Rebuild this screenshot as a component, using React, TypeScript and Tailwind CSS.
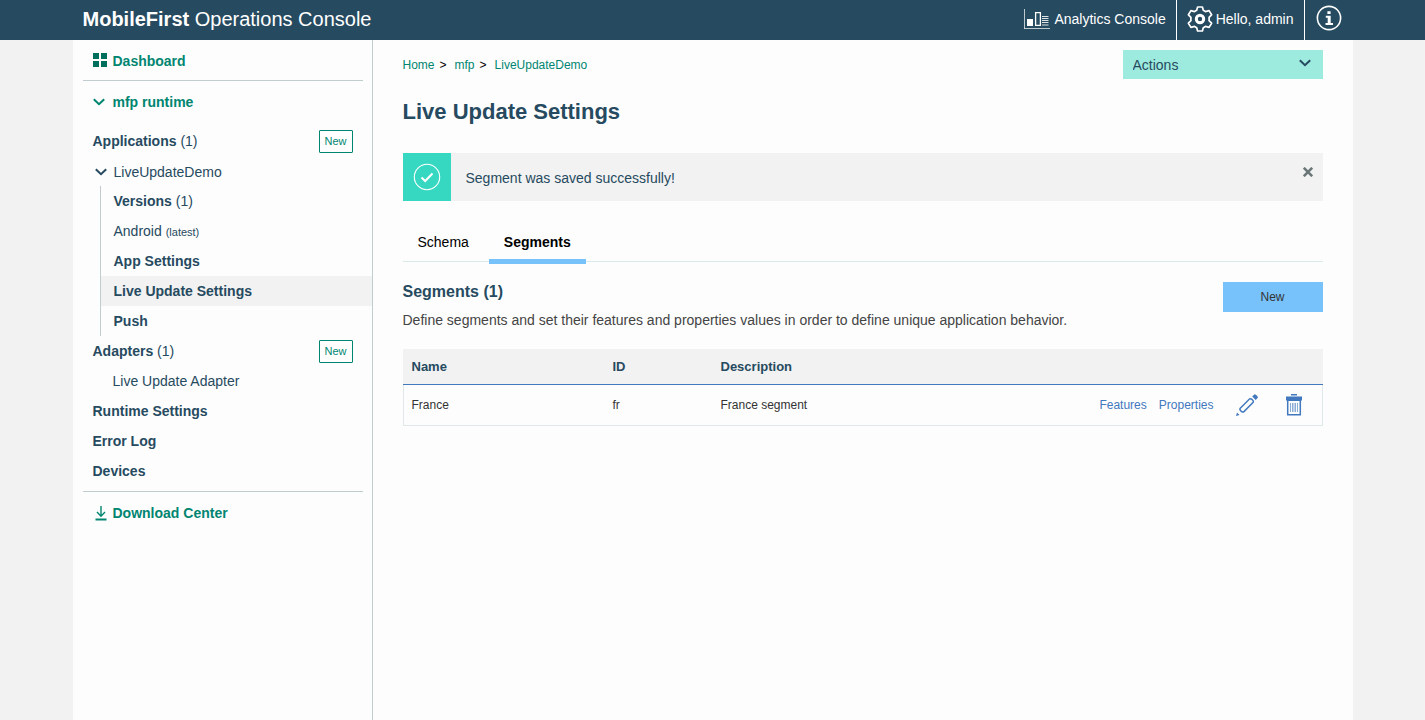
import type { ReactNode } from "react";

function ChevronIcon({ className }: { className?: string }) {
  return (
    <svg viewBox="0 0 12 8" className={className} fill="none" stroke="currentColor" strokeWidth="2" aria-hidden="true">
      <path d="M0.8 1.2 L6 6.2 L11.2 1.2" />
    </svg>
  );
}

function DashboardIcon() {
  return (
    <svg viewBox="0 0 14 14" className="mb-0.5 size-3.5 text-[#00705c]" fill="currentColor" aria-hidden="true">
      <path d="M0 0h6v6H0zM8 0h6v6H8zM0 8h6v6H0zM8 8h6v6H8z" />
    </svg>
  );
}

function DownloadIcon() {
  return (
    <svg viewBox="0 0 12 15" className="ml-0.5 h-[15px] w-3" fill="none" stroke="currentColor" aria-hidden="true">
      <path d="M6 0v10M2 6l4 4.2 4-4.2" strokeWidth="1.4" />
      <path d="M0.5 13.5h11" strokeWidth="2" />
    </svg>
  );
}

function AnalyticsIcon() {
  return (
    <svg viewBox="0 0 26 20" className="h-5 w-[26px]" fill="none" stroke="#fff" aria-hidden="true">
      <path d="M0.5 0v19.5" strokeOpacity="0.7" />
      <path d="M0 19.5h26" strokeOpacity="0.7" />
      <path d="M3 10h6v7H3z" fill="#fff" stroke="none" />
      <path d="M11.6 3.6h4.8v12.8h-4.8z" strokeWidth="1.3" />
      <path d="M18 7.5h6.5M18 9.5h6.5M18 11.5h6.5M18 13.5h6.5M18 16h6.5" strokeOpacity="0.85" />
    </svg>
  );
}

function GearIcon() {
  return (
    <svg viewBox="0 0 26 26" className="size-[26px]" fill="none" stroke="#fff" aria-hidden="true">
      <path
        d="M10.6 1h4.8l.9 3.3 2.2 1.3 3.6-1 2.5 4.2-2.500 2.500v3.400l2.500 2.500-2.500 4.200-3.600-1-2.200 1.300-.9 3.300h-4.800l-.9-3.300-2.200-1.300-3.600 1-2.500-4.200 2.500-2.500v-3.400l-2.500-2.500 2.500-4.200 3.600 1 2.200-1.300z"
        strokeWidth="1.7"
        strokeLinejoin="round"
      />
      <circle cx="13" cy="13" r="3.7" strokeWidth="3" />
    </svg>
  );
}

function InfoIcon() {
  return (
    <svg viewBox="0 0 26 26" className="size-[26px]" fill="none" stroke="#fff" aria-hidden="true">
      <circle cx="13" cy="13" r="11.6" strokeWidth="1.6" />
      <path d="M11.4 6.3h3.200v2.700h-3.200zM9.800 10.700h4.900v7.200H17V20H9.500v-2.100h2.200v-5.100H9.800z" fill="#fff" stroke="none" />
    </svg>
  );
}

function CheckIcon() {
  return (
    <svg viewBox="0 0 28 28" className="size-7" fill="none" stroke="#fff" aria-hidden="true">
      <circle cx="14" cy="14" r="12.7" strokeWidth="1.1" />
      <path d="M8.5 14.5l3.700 3.500 7.300-7.500" strokeWidth="2" />
    </svg>
  );
}

function PencilIcon() {
  return (
    <svg viewBox="0 0 22 22" className="size-[22px]" fill="none" stroke="#4178be" aria-hidden="true">
      <path d="M4 14.500L13.700 4.800c1.400-.7 4.500 2 3.500 3.500L7.500 18c-1.600.6-4.200-1.900-3.500-3.500z" strokeWidth="1.500" />
      <path d="M16.200 2.600L18.600.2c1.600.2 3 1.700 3.400 3.400l-2.300 2.300z" fill="#4178be" stroke="none" />
      <path d="M0 22l1-3.400 2.500 2.400z" fill="#4178be" stroke="none" />
    </svg>
  );
}

function TrashIcon() {
  return (
    <svg viewBox="0 0 16 22" className="h-[22px] w-4" fill="none" stroke="#4178be" aria-hidden="true">
      <path d="M5 0h6v1.500H5zM0 2.500h16V6l-1 1H1L0 6z" fill="#4178be" stroke="none" />
      <path d="M1.700 6v14.800h12.600V6" strokeWidth="1.500" />
      <path d="M4.500 9v9M6.500 9v9M8 9v9M9.500 9v9M11.500 9v9" strokeWidth="1" strokeOpacity="0.6" />
    </svg>
  );
}

function NewBadge({ label }: { label: string }) {
  return (
    <button
      type="button"
      aria-label={label}
      className="h-[23px] w-[34px] rounded-[1px] border border-[#008571] bg-white pt-0.5 text-[11px] text-[#008571]"
    >
      New
    </button>
  );
}

function SubItem({ children, active = false }: { children: ReactNode; active?: boolean }) {
  return (
    <li className={active ? "h-[30px] bg-[#f2f2f2] pl-[13px] leading-[31px]" : "h-[30px] pl-[13px] leading-[31px]"}>
      <a href="#">{children}</a>
    </li>
  );
}

function Sidebar() {
  return (
    <nav aria-label="Main" className="w-[300px] shrink-0 border-r border-[#c0cccd] text-sm text-[#264a60]">
      <a href="#" className="ml-5 flex h-10 items-center gap-1.5 pt-0.5 font-bold text-[#008571]">
        <DashboardIcon />
        Dashboard
      </a>
      <hr className="mr-[9px] ml-2.5 border-[#c0cccd]" />
      <a href="#" className="ml-5 flex h-[42px] items-center gap-2 font-bold text-[#008571]">
        <ChevronIcon className="h-2 w-3" />
        mfp runtime
      </a>
      <div className="mt-0.5 mr-[19px] ml-5 flex h-8 items-center justify-between">
        <a href="#">
          <b>Applications</b> (1)
        </a>
        <NewBadge label="New application" />
      </div>
      <a href="#" className="ml-[22px] flex h-[29px] items-center gap-[7px]">
        <ChevronIcon className="h-2 w-3" />
        LiveUpdateDemo
      </a>
      <ul className="ml-[27px] border-l border-[#c0cccd]">
        <SubItem>
          <b>Versions</b> (1)
        </SubItem>
        <SubItem>
          Android <span className="text-[11px]">(latest)</span>
        </SubItem>
        <SubItem>
          <b>App Settings</b>
        </SubItem>
        <SubItem active>
          <b>Live Update Settings</b>
        </SubItem>
        <SubItem>
          <b>Push</b>
        </SubItem>
      </ul>
      <div className="mr-[19px] ml-5 flex h-[30px] items-center justify-between">
        <a href="#">
          <b>Adapters</b> (1)
        </a>
        <NewBadge label="New adapter" />
      </div>
      <a href="#" className="ml-10 block leading-[30px]">
        Live Update Adapter
      </a>
      <a href="#" className="ml-5 block leading-[30px] font-bold">
        Runtime Settings
      </a>
      <a href="#" className="ml-5 block leading-[30px] font-bold">
        Error Log
      </a>
      <a href="#" className="ml-5 block leading-[30px] font-bold">
        Devices
      </a>
      <hr className="mt-[5px] mr-[9px] ml-2.5 border-[#c0cccd]" />
      <a href="#" className="ml-5 flex h-[42px] items-center gap-1.5 font-bold text-[#008571]">
        <DownloadIcon />
        Download Center
      </a>
    </nav>
  );
}

function Header() {
  return (
    <header className="bg-[#264a60] text-white">
      <div className="mx-auto flex h-10 max-w-[1280px] items-stretch justify-between px-2.5">
        <div className="self-center pb-0.5 text-xl">
          <b>MobileFirst</b> Operations Console
        </div>
        <div className="flex text-sm">
          <a href="#" className="flex items-center gap-1 border-r border-white pr-2.5 pb-0.5">
            <AnalyticsIcon />
            Analytics Console
          </a>
          <a href="#" className="flex items-center gap-[3px] border-r border-white px-2.5 pb-0.5">
            <GearIcon />
            Hello, admin
          </a>
          <button type="button" aria-label="About" className="flex items-center pr-px pb-1 pl-[11px]">
            <InfoIcon />
          </button>
        </div>
      </div>
    </header>
  );
}

function SegmentsTable() {
  return (
    <table className="mt-[19px] w-full border-separate border-spacing-0 text-left text-xs text-[#333]">
      <thead>
        <tr className="h-9 bg-[#f2f2f2] text-[13px] text-[#264a60]">
          <th className="w-[201px] border-b border-[#4178be] pl-[9px]">Name</th>
          <th className="w-[108px] border-b border-[#4178be] pl-[9px]">ID</th>
          <th className="border-b border-[#4178be] pl-[9px]">Description</th>
          <th aria-label="Row actions" className="border-b border-[#4178be]" />
        </tr>
      </thead>
      <tbody>
        <tr className="h-[41px]">
          <td className="border-b border-l border-[#dfe9e9] pl-2">France</td>
          <td className="border-b border-[#dfe9e9] pl-[9px]">fr</td>
          <td className="border-b border-[#dfe9e9] pl-[9px]">France segment</td>
          <td className="border-r border-b border-[#dfe9e9]">
            <div className="flex items-center justify-end pr-5 text-[#4178be]">
              <a href="#" className="mr-3">
                Features
              </a>
              <a href="#" className="mr-[22px]">
                Properties
              </a>
              <button type="button" aria-label="Edit segment" className="mr-7">
                <PencilIcon />
              </button>
              <button type="button" aria-label="Delete segment">
                <TrashIcon />
              </button>
            </div>
          </td>
        </tr>
      </tbody>
    </table>
  );
}

export default function App() {
  return (
    <div className="flex min-h-screen flex-col bg-[#f2f2f2] font-['Liberation_Sans',Arial,sans-serif]">
      <Header />
      <div className="mx-auto flex w-full max-w-[1280px] grow bg-[#fdfdfd]">
        <Sidebar />
        <main className="min-w-0 grow px-[30px] pt-2.5">
          <div className="flex h-[29px] items-center justify-between">
            <nav aria-label="Breadcrumb" className="flex text-xs text-[#008571]">
              <a href="#">Home</a>
              <span className="mr-2 ml-[5px] text-black">&gt;</span>
              <a href="#">mfp</a>
              <span className="mr-2 ml-[5px] text-black">&gt;</span>
              <a href="#">LiveUpdateDemo</a>
            </nav>
            <div className="relative">
              <select
                aria-label="Actions"
                className="block h-[29px] w-[200px] appearance-none bg-[#9deadf] px-2.5 text-sm text-[#264a60]"
              >
                <option>Actions</option>
              </select>
              <ChevronIcon className="pointer-events-none absolute top-[9px] right-3 h-2 w-3 text-[#264a60]" />
            </div>
          </div>
          <h1 className="mt-4 text-[22px] leading-[34px] font-bold text-[#264a60]">Live Update Settings</h1>
          <div role="status" className="mt-6 flex h-12 items-center bg-[#f2f2f2] text-sm text-[#264a60]">
            <span className="flex size-12 items-center justify-center bg-[#36d8c2]">
              <CheckIcon />
            </span>
            <span className="ml-[15px] grow pt-0.5">Segment was saved successfully!</span>
            <button type="button" aria-label="Dismiss" className="mr-2.5 mb-2.5">
              <svg viewBox="0 0 10 10" className="size-2.5" stroke="#6b7777" strokeWidth="2.6" aria-hidden="true">
                <path d="M0.8 0.8l8.4 8.4M9.2 0.8l-8.400 8.400" />
              </svg>
            </button>
          </div>
          <div role="tablist" className="mt-5 flex h-[41px] gap-[5px] border-b border-[#dbeaeb] text-sm text-black">
            <button type="button" role="tab" aria-selected="false" className="px-[15px] pt-0.5">
              Schema
            </button>
            <button
              type="button"
              role="tab"
              aria-selected="true"
              className="h-[43px] border-b-[5px] border-[#78c2fb] px-[15px] pt-[3px] font-bold"
            >
              Segments
            </button>
          </div>
          <div className="mt-5 flex items-start justify-between">
            <div>
              <h2 className="text-base leading-5 font-bold text-[#264a60]">Segments (1)</h2>
              <p className="mt-2 text-sm leading-5 text-[#444]">
                Define segments and set their features and properties values in order to define unique application
                behavior.
              </p>
            </div>
            <button type="button" className="h-[30px] w-[100px] shrink-0 bg-[#78c2fb] text-xs text-[#333]">
              New
            </button>
          </div>
          <SegmentsTable />
        </main>
      </div>
    </div>
  );
}
